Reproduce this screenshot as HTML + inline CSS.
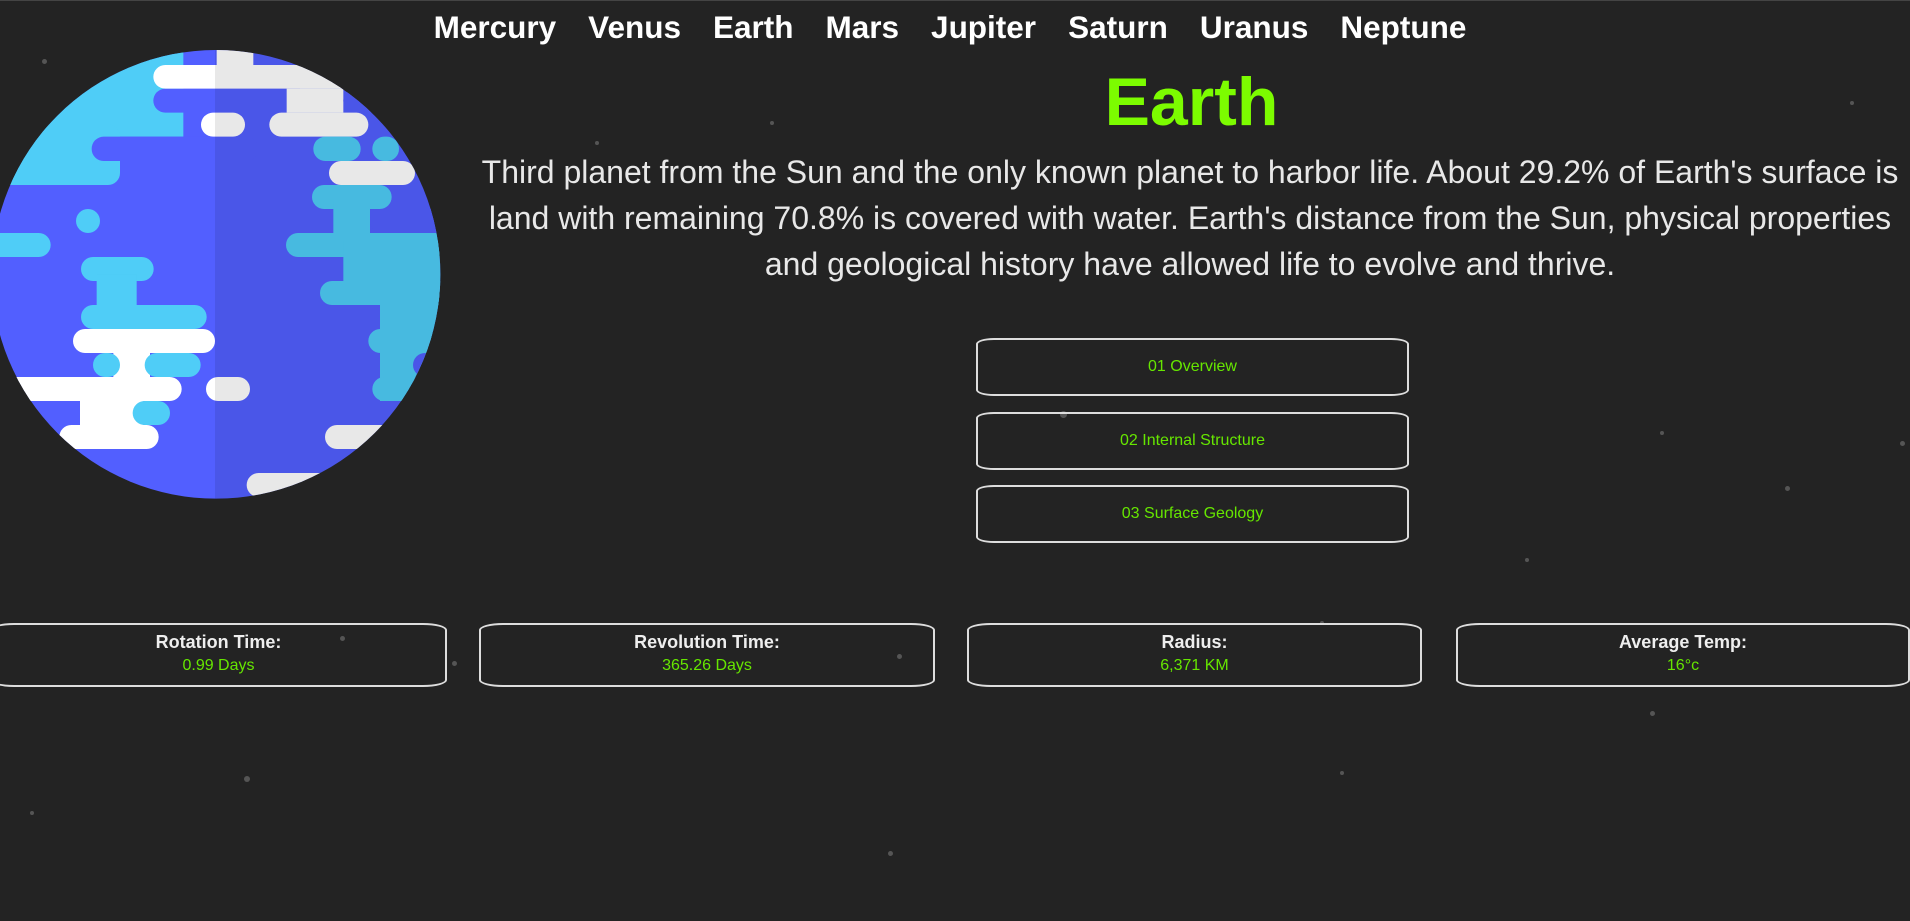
<!DOCTYPE html>
<html><head><meta charset="utf-8">
<style>
html,body{margin:0;padding:0;}
body{width:1910px;height:921px;background:#232323;position:relative;overflow:hidden;font-family:"Liberation Sans",sans-serif;border-top:1px solid #444;box-sizing:border-box;}
.nav{position:absolute;top:8px;left:0;width:1900px;text-align:center;white-space:nowrap;}
.nav span{display:inline-block;color:#fff;font-weight:bold;font-size:31.5px;margin:0 16px;}
h1{position:absolute;left:483px;width:1417px;top:62px;margin:0;text-align:center;color:#7cfc00;font-size:68px;font-weight:bold;}
p.d{position:absolute;left:390px;width:1600px;top:148px;margin:0;text-align:center;color:#e8e8e8;font-size:32px;line-height:46px;white-space:nowrap;}
.btn{position:absolute;left:976px;width:429px;height:54px;border:2px solid #ddd;border-radius:18px/6px;color:#66e600;font-size:16px;text-align:center;line-height:54px;}
.st{position:absolute;top:622px;height:60px;border:2px solid #ddd;border-radius:24px/7px;text-align:center;}
.st b{display:block;color:#eee;font-size:18px;margin-top:7px;}
.st i{display:block;font-style:normal;color:#66e600;font-size:16px;margin-top:4px;}
.s{position:absolute;border-radius:50%;background:#555;}
</style></head><body>
<div class="s" style="left:42px;top:58px;width:5px;height:5px"></div>
<div class="s" style="left:595px;top:140px;width:4px;height:4px"></div>
<div class="s" style="left:1060px;top:410px;width:7px;height:7px"></div>
<div class="s" style="left:897px;top:653px;width:5px;height:5px"></div>
<div class="s" style="left:340px;top:635px;width:5px;height:5px"></div>
<div class="s" style="left:452px;top:660px;width:5px;height:5px"></div>
<div class="s" style="left:1785px;top:485px;width:5px;height:5px"></div>
<div class="s" style="left:1660px;top:430px;width:4px;height:4px"></div>
<div class="s" style="left:1540px;top:170px;width:4px;height:4px"></div>
<div class="s" style="left:1850px;top:100px;width:4px;height:4px"></div>
<div class="s" style="left:1320px;top:620px;width:4px;height:4px"></div>
<div class="s" style="left:1650px;top:710px;width:5px;height:5px"></div>
<div class="s" style="left:244px;top:775px;width:6px;height:6px"></div>
<div class="s" style="left:888px;top:850px;width:5px;height:5px"></div>
<div class="s" style="left:1340px;top:770px;width:4px;height:4px"></div>
<div class="s" style="left:1900px;top:440px;width:5px;height:5px"></div>
<div class="s" style="left:1525px;top:557px;width:4px;height:4px"></div>
<div class="s" style="left:30px;top:810px;width:4px;height:4px"></div>
<div class="s" style="left:1180px;top:260px;width:4px;height:4px"></div>
<div class="s" style="left:770px;top:120px;width:4px;height:4px"></div>

<svg style="position:absolute;left:0;top:40px" width="450" height="470" viewBox="0 0 1350 1410">
<defs><clipPath id="c"><circle cx="648" cy="700" r="673"/></clipPath></defs>
<g clip-path="url(#c)">
<rect x="0" y="0" width="1350" height="1410" fill="#525fff"/>
<rect x="0" y="0" width="550" height="287" fill="#4fcdf7"/>
<rect x="0" y="250" width="360" height="182" rx="36" fill="#4fcdf7"/>
<rect x="0" y="287" width="300" height="145" fill="#4fcdf7"/>
<rect x="460" y="143" width="430" height="72" rx="36" fill="#525fff"/>
<rect x="275" y="287" width="500" height="73" rx="36" fill="#525fff"/>
<rect x="650" y="0" width="110" height="100" rx="30" fill="#fff"/>
<rect x="460" y="72" width="600" height="71" rx="36" fill="#fff"/>
<rect x="900" y="40" width="300" height="103" fill="#fff"/>
<rect x="860" y="143" width="170" height="72" fill="#fff"/>
<rect x="1030" y="143" width="140" height="72" rx="36" fill="#525fff"/>
<rect x="808" y="215" width="297" height="72" rx="36" fill="#fff"/>
<rect x="603" y="215" width="132" height="72" rx="36" fill="#fff"/>
<circle cx="264" cy="540" r="36" fill="#4fcdf7"/>
<rect x="-50" y="576" width="202" height="72" rx="36" fill="#4fcdf7"/>
<rect x="243" y="648" width="218" height="72" rx="36" fill="#4fcdf7"/>
<rect x="290" y="700" width="120" height="110" fill="#4fcdf7"/>
<rect x="243" y="792" width="377" height="72" rx="36" fill="#4fcdf7"/>
<rect x="219" y="864" width="426" height="72" rx="36" fill="#fff"/>
<rect x="340" y="920" width="110" height="100" fill="#fff"/>
<rect x="279" y="936" width="81" height="72" rx="36" fill="#4fcdf7"/>
<rect x="434" y="936" width="168" height="72" rx="36" fill="#4fcdf7"/>
<rect x="0" y="1008" width="545" height="72" rx="36" fill="#fff"/>
<rect x="0" y="1008" width="300" height="72" fill="#fff"/>
<rect x="240" y="1060" width="190" height="120" fill="#fff"/>
<rect x="398" y="1080" width="112" height="72" rx="36" fill="#4fcdf7"/>
<rect x="178" y="1152" width="298" height="72" rx="36" fill="#fff"/>
<rect x="618" y="1008" width="132" height="72" rx="36" fill="#fff"/>
<rect x="940" y="287" width="142" height="73" rx="36" fill="#4fcdf7"/>
<rect x="1117" y="287" width="80" height="73" rx="36" fill="#4fcdf7"/>
<rect x="987" y="360" width="258" height="72" rx="36" fill="#fff"/>
<rect x="936" y="432" width="239" height="72" rx="36" fill="#4fcdf7"/>
<rect x="1000" y="480" width="110" height="110" fill="#4fcdf7"/>
<rect x="1110" y="504" width="300" height="72" rx="36" fill="#525fff"/>
<rect x="858" y="576" width="500" height="72" rx="36" fill="#4fcdf7"/>
<rect x="1030" y="600" width="320" height="192" fill="#4fcdf7"/>
<rect x="960" y="720" width="400" height="72" rx="36" fill="#4fcdf7"/>
<rect x="1140" y="770" width="220" height="310" fill="#4fcdf7"/>
<rect x="1105" y="864" width="200" height="72" rx="36" fill="#4fcdf7"/>
<rect x="1117" y="1008" width="200" height="72" rx="36" fill="#4fcdf7"/>
<circle cx="1275" cy="972" r="36" fill="#525fff"/>
<rect x="975" y="1152" width="300" height="72" rx="36" fill="#fff"/>
<rect x="740" y="1296" width="400" height="72" rx="36" fill="#fff"/>
<rect x="645" y="0" width="800" height="1410" fill="#000" opacity="0.09"/>
</g>
</svg>

<div class="nav"><span>Mercury</span><span>Venus</span><span>Earth</span><span>Mars</span><span>Jupiter</span><span>Saturn</span><span>Uranus</span><span>Neptune</span></div>
<h1>Earth</h1>
<p class="d">Third planet from the Sun and the only known planet to harbor life. About 29.2% of Earth's surface is<br>land with remaining 70.8% is covered with water. Earth's distance from the Sun, physical properties<br>and geological history have allowed life to evolve and thrive.</p>
<div class="btn" style="top:337px">01 Overview</div>
<div class="btn" style="top:411px">02 Internal Structure</div>
<div class="btn" style="top:484px">03 Surface Geology</div>
<div class="st" style="left:-10px;width:453px"><b>Rotation Time:</b><i>0.99 Days</i></div>
<div class="st" style="left:479px;width:452px"><b>Revolution Time:</b><i>365.26 Days</i></div>
<div class="st" style="left:967px;width:451px"><b>Radius:</b><i>6,371 KM</i></div>
<div class="st" style="left:1456px;width:450px"><b>Average Temp:</b><i>16°c</i></div>
</body></html>
